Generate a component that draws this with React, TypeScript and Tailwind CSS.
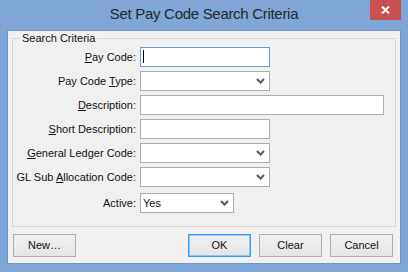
import React from "react";

function Chevron() {
  return (
    <svg width="9" height="7" viewBox="0 0 9 7" className="absolute right-[4px] top-1/2 -translate-y-1/2">
      <polyline points="1,1.5 4.5,5 8,1.5" fill="none" stroke="#5a5a5a" strokeWidth="2" />
    </svg>
  );
}

function Label({ children }: { children: React.ReactNode }) {
  return <div className="w-[124px] shrink-0 text-right pr-[1px] whitespace-nowrap text-[11px] leading-[14px] text-[#111]">{children}</div>;
}

function TextBox({ w, focused }: { w: string; focused?: boolean }) {
  return (
    <div
      className={
        "relative h-[20px] bg-white border " +
        w +
        (focused ? " border-[#5b9fe3]" : " border-[#abadb3]")
      }
    >
      {focused && <div className="absolute left-[2px] top-[2px] w-[1px] h-[13px] bg-black" />}
    </div>
  );
}

function Combo({ w, value }: { w: string; value?: string }) {
  return (
    <div className={"relative h-[20px] bg-white border border-[#acacac] flex items-center pl-[2px] " + w}>
      <span className="text-[11px] leading-[14px] text-[#111]">{value}</span>
      <Chevron />
    </div>
  );
}

function Btn({ children, def }: { children: React.ReactNode; def?: boolean }) {
  return (
    <div
      className={
        "w-[63px] h-[23px] flex items-center justify-center text-[11px] text-[#111] bg-gradient-to-b from-[#f0f0f0] to-[#e5e5e5] border " +
        (def ? "border-[#3399ff] shadow-[inset_0_0_0_1px_rgba(51,153,255,0.45)]" : "border-[#acacac]")
      }
    >
      {children}
    </div>
  );
}

export default function App() {
  return (
    <div className="w-[408px] h-[272px] bg-[#7fa6d6] flex flex-col font-['Liberation_Sans',Arial,sans-serif]">
      <div className="h-[30px] relative shrink-0 flex items-center justify-center pb-[1px]">
        <span className="text-[15px] text-[#262626] tracking-[-0.3px]">Set Pay Code Search Criteria</span>
        <div className="absolute right-[7px] top-0 w-[31px] h-[20px] bg-[#c75050] flex items-center justify-center">
          <svg width="9" height="8" viewBox="0 0 9 8">
            <path d="M1 0.5 L8 7.5 M8 0.5 L1 7.5" stroke="#fff" strokeWidth="1.9" />
          </svg>
        </div>
      </div>
      <div className="mx-[7px] mb-[8px] flex-1 border border-[#7094c4] bg-[#f0f0f0] flex flex-col px-[4px]">
        <fieldset className="border border-[#d5d5d5] px-0 pb-[13px] m-0 min-w-0">
          <legend className="ml-[7px] px-[2px] text-[11px] leading-[14px] text-[#111]">Search Criteria</legend>
          <div className="flex flex-col gap-[4px] pt-[2px]">
            <div className="flex items-center gap-[3px]">
              <Label><u>P</u>ay Code:</Label>
              <TextBox w="w-[130px]" focused />
            </div>
            <div className="flex items-center gap-[3px]">
              <Label>Pay Code <u>T</u>ype:</Label>
              <Combo w="w-[130px]" />
            </div>
            <div className="flex items-center gap-[3px]">
              <Label><u>D</u>escription:</Label>
              <TextBox w="w-[244px]" />
            </div>
            <div className="flex items-center gap-[3px]">
              <Label><u>S</u>hort Description:</Label>
              <TextBox w="w-[130px]" />
            </div>
            <div className="flex items-center gap-[3px]">
              <Label><u>G</u>eneral Ledger Code:</Label>
              <Combo w="w-[130px]" />
            </div>
            <div className="flex items-center gap-[3px]">
              <Label>GL Sub <u>A</u>llocation Code:</Label>
              <Combo w="w-[130px]" />
            </div>
            <div className="flex items-center gap-[3px] mt-[2px]">
              <Label>Active:</Label>
              <Combo w="w-[94px]" value="Yes" />
            </div>
          </div>
        </fieldset>
        <div className="flex items-start pt-[7px] pl-[1px] pr-[3px]">
          <Btn>New…</Btn>
          <div className="flex-1" />
          <div className="flex gap-[8px]">
            <Btn def>OK</Btn>
            <Btn>Clear</Btn>
            <Btn>Cancel</Btn>
          </div>
        </div>
      </div>
    </div>
  );
}
